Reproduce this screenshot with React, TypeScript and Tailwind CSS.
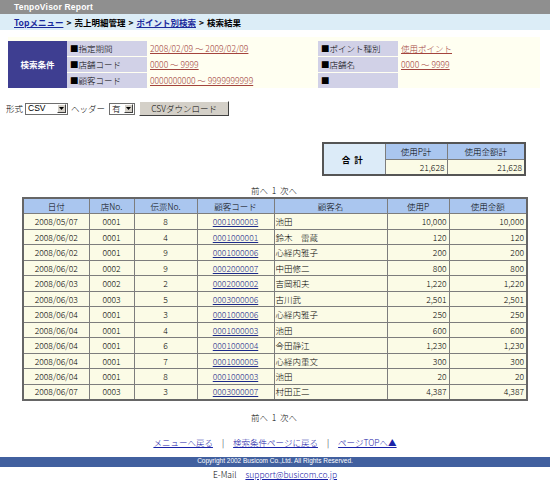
import React from 'react';

const rows = [
  ['2008/05/07', '0001', '8', '0001000003', '池田', '10,000', '10,000'],
  ['2008/06/02', '0001', '4', '0001000001', '鈴木　雷蔵', '120', '120'],
  ['2008/06/02', '0001', '9', '0001000006', '心経内雅子', '200', '200'],
  ['2008/06/02', '0002', '9', '0002000007', '中田修二', '800', '800'],
  ['2008/06/03', '0002', '2', '0002000002', '吉岡和夫', '1,220', '1,220'],
  ['2008/06/03', '0003', '5', '0003000006', '古川武', '2,501', '2,501'],
  ['2008/06/04', '0001', '3', '0001000006', '心経内雅子', '250', '250'],
  ['2008/06/04', '0001', '4', '0001000003', '池田', '600', '600'],
  ['2008/06/04', '0001', '6', '0001000004', '今田静江', '1,230', '1,230'],
  ['2008/06/04', '0001', '7', '0001000005', '心経内重文', '300', '300'],
  ['2008/06/04', '0001', '8', '0001000003', '池田', '20', '20'],
  ['2008/06/07', '0003', '3', '0003000007', '村田正二', '4,387', '4,387'],
];

const Arrow: React.FC = () => (
  <span className="flex items-center justify-center w-[9px] h-[9px] bg-[#d4d0c8] border-t border-l border-t-white border-l-white border-r border-b border-r-[#404040] border-b-[#404040] mr-[1px]">
    <svg width="5" height="3" viewBox="0 0 5 3">
      <path d="M0 0h5L2.5 3z" fill="#000" />
    </svg>
  </span>
);

const App: React.FC = () => {
  const th = 'border border-[#7d7d7d] bg-[#aac6ef] font-light text-center';
  const td = 'border border-[#7d7d7d] bg-[#fbfbe6]';

  return (
    <div className="w-[550px] h-[498px] bg-white text-[8.5px] leading-none font-light text-black font-['Noto_Sans_CJK_JP',sans-serif] overflow-hidden">
      {/* Title */}
      <div className="h-[14px] bg-[#8f8f8f] flex items-center pl-[14px]">
        <span className="text-white font-bold text-[8.5px] font-['Liberation_Sans',sans-serif] tracking-[0.2px]">TenpoVisor Report</span>
      </div>
      {/* Breadcrumb */}
      <div className="h-[16px] bg-[#dcedf7] flex items-center pl-[14px] font-bold gap-[3px]">
        <a className="text-[#1b2a9c] underline">Topメニュー</a>
        <span>&gt;</span>
        <span>売上明細管理</span>
        <span>&gt;</span>
        <a className="text-[#1b2a9c] underline">ポイント別検索</a>
        <span>&gt;</span>
        <span>検索結果</span>
      </div>

      {/* Search conditions */}
      <div className="mt-[7px] ml-[8px] w-[532px] h-[51px] bg-[#fffff1] pt-[4px] flex">
        <div className="w-[59px] bg-[#3e3e91] text-white font-bold flex items-center justify-center">検索条件</div>
        <div className="flex flex-col gap-[1px] w-[80px]">
          <div className="h-[15px] bg-[#d1d1e7] flex items-center pl-[3px]">■指定期間</div>
          <div className="h-[15px] bg-[#d1d1e7] flex items-center pl-[3px]">■店舗コード</div>
          <div className="h-[15px] bg-[#d1d1e7] flex items-center pl-[3px]">■顧客コード</div>
        </div>
        <div className="flex flex-col gap-[1px] w-[171px] text-[#a3443d]">
          <div className="h-[15px] flex items-center pl-[3px]"><a className="underline">2008/02/09 ～ 2009/02/09</a></div>
          <div className="h-[15px] flex items-center pl-[3px]"><a className="underline">0000 ～ 9999</a></div>
          <div className="h-[15px] flex items-center pl-[3px]"><a className="underline">0000000000 ～ 9999999999</a></div>
        </div>
        <div className="flex flex-col gap-[1px] w-[80px]">
          <div className="h-[15px] bg-[#d1d1e7] flex items-center pl-[3px]">■ポイント種別</div>
          <div className="h-[15px] bg-[#d1d1e7] flex items-center pl-[3px]">■店舗名</div>
          <div className="h-[15px] bg-[#d1d1e7] flex items-center pl-[3px]">■</div>
        </div>
        <div className="flex flex-col gap-[1px] text-[#a3443d]">
          <div className="h-[15px] flex items-center pl-[3px]"><a className="underline">使用ポイント</a></div>
          <div className="h-[15px] flex items-center pl-[3px]"><a className="underline">0000 ～ 9999</a></div>
        </div>
      </div>

      {/* Format row */}
      <div className="mt-[13px] ml-[6px] h-[15px] flex items-center">
        <span>形式</span>
        <span className="ml-[2px] w-[43px] h-[12px] bg-white border border-[#6e6e6e] flex items-center justify-between">
          <span className="pl-[2px] font-['Liberation_Sans',sans-serif]">CSV</span>
          <Arrow />
        </span>
        <span className="ml-[3px]">ヘッダー</span>
        <span className="ml-[4px] w-[26px] h-[12px] bg-white border border-[#6e6e6e] flex items-center justify-between">
          <span className="pl-[2px]">有</span>
          <Arrow />
        </span>
        <span className="ml-[4px] w-[90px] h-[15px] bg-[#d4d0c8] border border-t-white border-l-white border-r-[#404040] border-b-[#404040] flex items-center justify-center">
          CSVダウンロード
        </span>
      </div>

      {/* Totals */}
      <div className="mt-[26px] flex justify-end pr-[24px]">
        <table className="border-collapse border-2 border-[#555]">
          <tbody>
            <tr className="h-[16px]">
              <td rowSpan={2} className="w-[62px] border border-[#7d7d7d] bg-[#dcebf8] text-center font-bold tracking-[4px]">合計</td>
              <td className={`${th} w-[62px]`}>使用P計</td>
              <td className={`${th} w-[78px]`}>使用金額計</td>
            </tr>
            <tr className="h-[16px]">
              <td className={`${td} text-right pr-[2px]`}>21,628</td>
              <td className={`${td} text-right pr-[2px]`}>21,628</td>
            </tr>
          </tbody>
        </table>
      </div>

      {/* Pager */}
      <div className="mt-[8px] ml-[22px] w-[504px] h-[13px] flex items-center justify-center">前へ&nbsp;&nbsp;1&nbsp;&nbsp;次へ</div>

      {/* Main table */}
      <table className="ml-[22px] w-[504px] border-collapse border-2 border-[#666] table-fixed">
        <colgroup>
          <col className="w-[66px]" />
          <col className="w-[45px]" />
          <col className="w-[63px]" />
          <col className="w-[77px]" />
          <col className="w-[113px]" />
          <col className="w-[62px]" />
          <col className="w-[78px]" />
        </colgroup>
        <thead>
          <tr className="h-[15.5px]">
            <th className={th}>日付</th>
            <th className={th}>店No.</th>
            <th className={th}>伝票No.</th>
            <th className={th}>顧客コード</th>
            <th className={th}>顧客名</th>
            <th className={th}>使用P</th>
            <th className={th}>使用金額</th>
          </tr>
        </thead>
        <tbody>
          {rows.map((r, i) => (
            <tr key={i} className="h-[15.5px]">
              <td className={`${td} text-center`}>{r[0]}</td>
              <td className={`${td} text-center`}>{r[1]}</td>
              <td className={`${td} text-center`}>{r[2]}</td>
              <td className={`${td} text-center`}><a className="text-[#1d2b8c] underline">{r[3]}</a></td>
              <td className={`${td} pl-[1px]`}>{r[4]}</td>
              <td className={`${td} text-right pr-[2px]`}>{r[5]}</td>
              <td className={`${td} text-right pr-[2px]`}>{r[6]}</td>
            </tr>
          ))}
        </tbody>
      </table>

      <div className="mt-[10px] ml-[22px] w-[504px] h-[13px] flex items-center justify-center">前へ&nbsp;&nbsp;1&nbsp;&nbsp;次へ</div>

      {/* Links */}
      <div className="mt-[12px] h-[13px] flex items-center justify-center gap-[9px] text-[#1a22a8]">
        <a className="underline">メニューへ戻る</a>
        <span className="text-black">|</span>
        <a className="underline">検索条件ページに戻る</a>
        <span className="text-black">|</span>
        <a className="underline">ページTOPへ▲</a>
      </div>

      {/* Footer */}
      <div className="mt-[8px] h-[10px] bg-[#41609f] flex items-center justify-center text-white text-[6.5px] font-['Liberation_Sans',sans-serif]">
        Copyright 2002 Busicom Co.,Ltd. All Rights Reserved.
      </div>
      <div className="mt-[2px] h-[12px] flex items-center justify-center gap-[9px]">
        <span>E-Mail</span>
        <a className="text-[#1a22a8] underline">support@busicom.co.jp</a>
      </div>
    </div>
  );
};

export default App;
